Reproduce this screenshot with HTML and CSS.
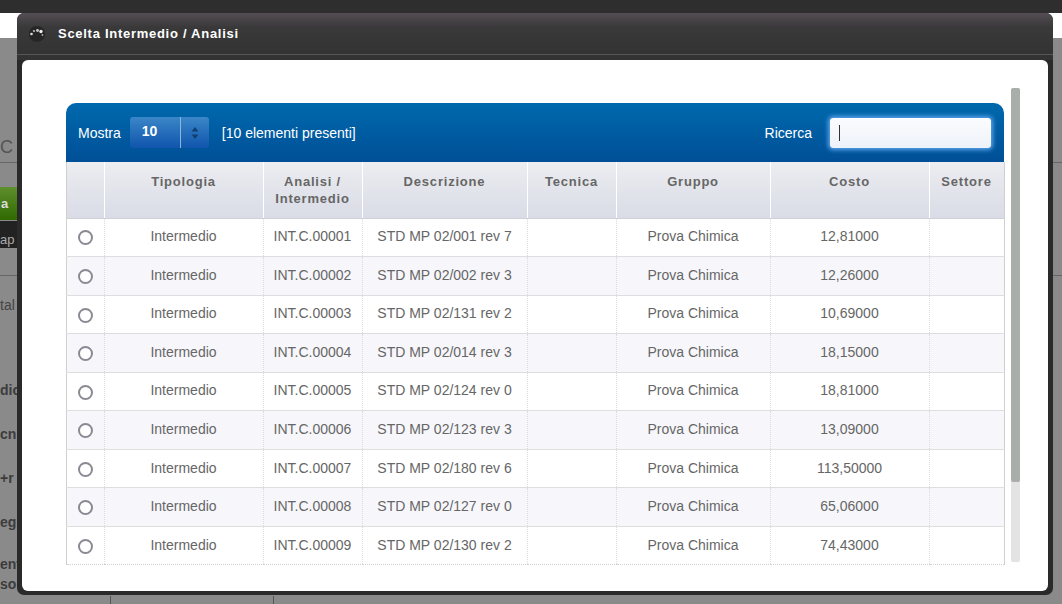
FILE: index.html
```html
<!DOCTYPE html>
<html lang="it">
<head>
    <meta charset="UTF-8">
    <meta name="viewport" content="width=device-width, initial-scale=1.0">
    <title>Scelta Intermedio / Analisi</title>
    <link rel="stylesheet" href="styles.css">
</head>
<body>
    <div class="topbar"></div>
    <div class="fascia"></div>
    <div class="pagina">
        <div class="lato-c">C</div>
        <div class="lato-verde">a</div>
        <div class="lato-scuro">ap</div>
        <div class="lato-grigio">tal</div>
        <div class="lato-testi">
            <span>dic</span>
            <span>cn</span>
            <span>+r</span>
            <span>eg</span>
            <span class="lato-ultimo">ent<br>so</span>
        </div>
    </div>
    <div class="fondo">
        <div class="fondo-a"></div>
        <div class="fondo-b"></div>
    </div>

    <div class="modale">
        <div class="modale-titolo">
            <svg class="modale-icona" width="18" height="18" viewBox="0 0 18 18">
                <circle cx="9" cy="9" r="8" fill="#262626"/>
                <circle cx="3.5" cy="9" r="1.3" fill="#ddd"/>
                <circle cx="6" cy="6" r="1.1" fill="#bbb"/>
                <circle cx="9.5" cy="5.5" r="1.4" fill="#ccc"/>
                <circle cx="13" cy="6.5" r="1.7" fill="#eee"/>
                <circle cx="14.5" cy="10" r="0.9" fill="#aaa"/>
            </svg>
            <span>Scelta Intermedio / Analisi</span>
        </div>
        <div class="modale-corpo">
            <div class="griglia">
                <div class="griglia-testa">
                    <span>Mostra</span>
                    <div class="select-box">
                        <span class="select-valore">10</span>
                        <span class="select-freccia">
                            <svg width="8" height="14" viewBox="0 0 8 14">
                                <path d="M4 1 L7.5 5.5 H0.5 Z" fill="#123f73"/>
                                <path d="M4 13 L7.5 8.5 H0.5 Z" fill="#123f73"/>
                            </svg>
                        </span>
                    </div>
                    <span class="conteggio">[10 elementi presenti]</span>
                    <span class="ricerca-label">Ricerca</span>
                    <div class="ricerca-box"><i class="cursore"></i></div>
                </div>
                <table>
                    <colgroup>
                        <col class="c0"><col class="c1"><col class="c2"><col class="c3"><col class="c4"><col class="c5"><col class="c6"><col class="c7">
                    </colgroup>
                    <thead>
                        <tr>
                            <th></th><th>Tipologia</th><th>Analisi /<br>Intermedio</th><th>Descrizione</th><th>Tecnica</th><th>Gruppo</th><th>Costo</th><th>Settore</th>
                        </tr>
                    </thead>
                    <tbody>
                        <tr><td><i class="radio"></i></td><td>Intermedio</td><td>INT.C.00001</td><td>STD MP 02/001 rev 7</td><td></td><td>Prova Chimica</td><td>12,81000</td><td></td></tr>
                        <tr><td><i class="radio"></i></td><td>Intermedio</td><td>INT.C.00002</td><td>STD MP 02/002 rev 3</td><td></td><td>Prova Chimica</td><td>12,26000</td><td></td></tr>
                        <tr><td><i class="radio"></i></td><td>Intermedio</td><td>INT.C.00003</td><td>STD MP 02/131 rev 2</td><td></td><td>Prova Chimica</td><td>10,69000</td><td></td></tr>
                        <tr><td><i class="radio"></i></td><td>Intermedio</td><td>INT.C.00004</td><td>STD MP 02/014 rev 3</td><td></td><td>Prova Chimica</td><td>18,15000</td><td></td></tr>
                        <tr><td><i class="radio"></i></td><td>Intermedio</td><td>INT.C.00005</td><td>STD MP 02/124 rev 0</td><td></td><td>Prova Chimica</td><td>18,81000</td><td></td></tr>
                        <tr><td><i class="radio"></i></td><td>Intermedio</td><td>INT.C.00006</td><td>STD MP 02/123 rev 3</td><td></td><td>Prova Chimica</td><td>13,09000</td><td></td></tr>
                        <tr><td><i class="radio"></i></td><td>Intermedio</td><td>INT.C.00007</td><td>STD MP 02/180 rev 6</td><td></td><td>Prova Chimica</td><td>113,50000</td><td></td></tr>
                        <tr><td><i class="radio"></i></td><td>Intermedio</td><td>INT.C.00008</td><td>STD MP 02/127 rev 0</td><td></td><td>Prova Chimica</td><td>65,06000</td><td></td></tr>
                        <tr><td><i class="radio"></i></td><td>Intermedio</td><td>INT.C.00009</td><td>STD MP 02/130 rev 2</td><td></td><td>Prova Chimica</td><td>74,43000</td><td></td></tr>
                    </tbody>
                </table>
            </div>
            <div class="scrollbar"><div class="scrollbar-pollice"></div></div>
        </div>
    </div>
</body>
</html>
```

FILE: styles.css
```css
html, body {
    margin: 0;
    height: 100%;
    overflow: hidden;
}
body {
    font-family: "Liberation Sans", Arial, sans-serif;
    font-size: 14px;
    background: #858585;
    color: #666;
    display: flex;
    flex-direction: column;
}
.topbar {
    height: 13px;
    flex: none;
    background: #2e2e2e;
}
.fascia {
    height: 25px;
    flex: none;
    background: #fff;
}
.pagina {
    flex: 1;
    overflow: hidden;
    background: #8a8a8a;
    color: #444;
    white-space: nowrap;
}
.lato-c {
    height: 125px;
    box-sizing: border-box;
    padding-top: 99px;
    border-bottom: 1px solid #666;
    font-size: 18px;
    color: #555;
}
.lato-verde {
    width: 17px;
    height: 33px;
    margin-top: 24px;
    background: linear-gradient(to bottom, #5f8f2e, #2f6a00);
    color: #ddd;
    font-weight: bold;
    font-size: 13px;
    line-height: 33px;
    padding-left: 1px;
    box-sizing: border-box;
}
.lato-scuro {
    width: 17px;
    height: 27px;
    margin-top: 1px;
    background: #222;
    color: #aaa;
    font-size: 13px;
    line-height: 38px;
}
.lato-grigio {
    height: 60px;
    margin-top: 27px;
    box-sizing: border-box;
    border-top: 1px solid #666;
    line-height: 58px;
    font-size: 14px;
    color: #444;
}
.lato-testi {
    display: flex;
    flex-direction: column;
    gap: 27px;
    padding-top: 47px;
    font-weight: bold;
    font-size: 14px;
    line-height: 17px;
    color: #3c3c3c;
}
.lato-ultimo {
    margin-top: -4px;
    line-height: 20px;
}
.fondo {
    height: 8px;
    flex: none;
    display: flex;
    background: #8a8a8a;
}
.fondo-a {
    width: 110px;
    border-right: 1px solid #555;
}
.fondo-b {
    width: 162px;
    border-right: 1px solid #555;
}

/* finestra modale */
.modale {
    position: absolute;
    left: 17px;
    top: 13px;
    width: 1036px;
    height: 582px;
    box-sizing: border-box;
    padding: 0 5px 4px;
    background: #2b2a2b;
    border-radius: 7px;
    display: flex;
    flex-direction: column;
}
.modale-titolo {
    height: 47px;
    flex: none;
    margin: 0 -5px;
    display: flex;
    align-items: center;
    gap: 12px;
    padding: 0 0 6px 11px;
    box-sizing: border-box;
    color: #fff;
    font-size: 13px;
    font-weight: bold;
    letter-spacing: 0.72px;
    border-radius: 7px 7px 0 0;
    background: linear-gradient(to bottom, #544e54, #3a393a 14px, #333 41px, #59545a 41px, #59545a 42px, #333 42px);
}
.modale-corpo {
    flex: 1;
    background: #fff;
    border-radius: 6px;
    display: flex;
    padding: 43px 0 0 44px;
    box-sizing: border-box;
    overflow: hidden;
}
.griglia {
    width: 938px;
    flex: none;
}
.griglia-testa {
    height: 59px;
    box-sizing: border-box;
    border-radius: 10px 10px 0 0;
    background: linear-gradient(to bottom, #0069ad, #004f96);
    color: #fff;
    display: flex;
    align-items: center;
    padding: 0 13px 0 12px;
}
.select-box {
    display: flex;
    margin-left: 9px;
    width: 79px;
    height: 31px;
    border-radius: 3px;
    overflow: hidden;
    background: linear-gradient(to bottom, #3b86c8, #0f55ad);
}
.select-valore {
    width: 51px;
    padding-left: 12px;
    box-sizing: border-box;
    font-weight: bold;
    line-height: 28px;
    border-right: 1px solid #8db4da;
}
.select-freccia {
    flex: 1;
    display: flex;
    align-items: center;
    justify-content: center;
}
.conteggio {
    margin-left: 13px;
}
.ricerca-label {
    margin-left: auto;
}
.ricerca-box {
    width: 161px;
    height: 30px;
    margin-left: 18px;
    box-sizing: border-box;
    background: linear-gradient(to bottom, #fbfcfe, #eef2f9);
    border-radius: 3px;
    box-shadow: 0 0 4px 2px #5aa3ec;
    display: flex;
    align-items: center;
    padding-left: 9px;
}
.cursore {
    width: 1px;
    height: 16px;
    background: #333;
}
table {
    width: 938px;
    border-collapse: collapse;
    table-layout: fixed;
    border-left: 1px solid #d0d0d0;
    border-right: 1px solid #d0d0d0;
}
.c0 { width: 38px; }
.c1 { width: 159px; }
.c2 { width: 99px; }
.c3 { width: 165px; }
.c4 { width: 89px; }
.c5 { width: 154px; }
.c6 { width: 159px; }
.c7 { width: 75px; }
th {
    height: 56px;
    vertical-align: top;
    padding: 11px 1px 0 0;
    box-sizing: border-box;
    background: linear-gradient(to bottom, #ecedf0, #d9dbe6);
    border-left: 1px solid #fff;
    border-bottom: 1px solid #cfd2d6;
    color: #666;
    font-size: 13px;
    line-height: 17px;
    letter-spacing: 0.8px;
    text-align: center;
}
th:first-child {
    border-left: 0;
}
td {
    height: 38.55px;
    padding: 0 1px 2px 0;
    box-sizing: border-box;
    text-align: center;
    color: #666;
    border-left: 1px dotted #dcdcdc;
    border-bottom: 1px solid #dedede;
}
td:first-child {
    border-left: 0;
}
tbody tr:nth-child(even) td {
    background: #f7f7fb;
}
tbody tr:last-child td {
    border-bottom: 1px dotted #d0d0d0;
}
.radio {
    display: inline-block;
    width: 15px;
    height: 15px;
    box-sizing: border-box;
    margin-top: 3px;
    border: 2px solid #8a8a94;
    border-radius: 50%;
    background: #fff;
    vertical-align: middle;
}
.scrollbar {
    width: 9px;
    height: 474px;
    margin: -15px 0 0 7px;
    background: #e3e3e3;
    border-radius: 2px;
    flex: none;
}
.scrollbar-pollice {
    height: 394px;
    background: #a9aeaa;
    border-radius: 2px;
}
```
